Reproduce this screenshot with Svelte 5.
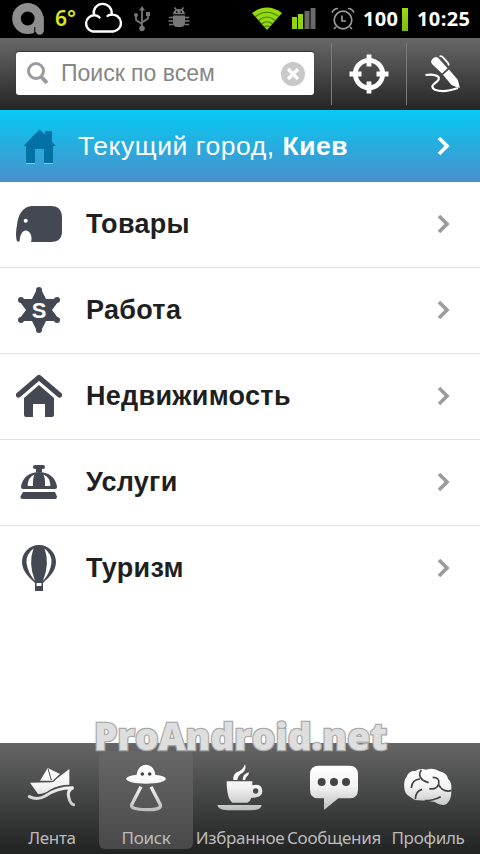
<script>
  const categories = [
    { id: 'goods', name: 'Товары' },
    { id: 'jobs', name: 'Работа' },
    { id: 'realty', name: 'Недвижимость' },
    { id: 'services', name: 'Услуги' },
    { id: 'travel', name: 'Туризм' }
  ];

  const tabs = [
    { id: 'feed', name: 'Лента' },
    { id: 'search', name: 'Поиск' },
    { id: 'favorites', name: 'Избранное' },
    { id: 'messages', name: 'Сообщения' },
    { id: 'profile', name: 'Профиль' }
  ];

  let query = $state('');
  let activeTab = $state('search');
</script>

<div class="screen">
  <div class="status">
    <svg class="logo" viewBox="0 0 32 34" width="32" height="34">
      <circle cx="15.7" cy="16.500" r="11.200" fill="none" stroke="#8e8e8e" stroke-width="8.600" />
      <path d="M27.700 16V28.500" stroke="#8e8e8e" stroke-width="8.300" stroke-linecap="round" />
      <path d="M22.800 25V33" stroke="#000" stroke-width="1" />
    </svg>
    <span class="temp">6°</span>
    <svg class="cloud" viewBox="0 0 40 32" width="40" height="32">
      <path d="M9.500 29.500A8.200 8.200 0 0 1 11 13.300A9 9 0 1 1 28.500 12.700A8.400 8.400 0 0 1 30.500 29.500zM11 13.300Q14.500 13 16.500 15.500M28.500 12.700Q26 12.500 24.500 14" fill="none" stroke="#fff" stroke-width="2.400" stroke-linecap="round" />
    </svg>
    <svg class="usb" viewBox="0 0 18 26" width="18" height="26" fill="none" stroke="#777" stroke-width="1.800">
      <path d="M9 3V22M9 18L3 14V10M9 16.500L15 12.500V8" />
      <path d="M9 0l3 4.500H6z" fill="#777" stroke="none" />
      <circle cx="9" cy="22.500" r="2.800" fill="#777" stroke="none" />
      <circle cx="3" cy="9" r="2" fill="#777" stroke="none" />
      <path d="M13 6h4v4h-4z" fill="#777" stroke="none" />
    </svg>
    <svg class="bug" viewBox="0 0 22 22" width="22" height="22">
      <path d="M5 7.300Q5.500 2 11 2T17 7.300zM5 8.500h12V16q0 4-4 4H9q-4 0-4-4z" fill="#777" />
      <path d="M6.500 .5l2 2.500M15.500 .5l-2 2.500M5 10.500H1M5 14H.5M5 17.500H1M17 10.500h4M17 14h4.500M17 17.500h4" fill="none" stroke="#777" stroke-width="1.600" />
      <path d="M8 4.300h1.500v1.500H8zM12.500 4.300H14v1.500h-1.500z" fill="#000" />
    </svg>
    <svg class="wifi" viewBox="0 0 32 24" width="32" height="24">
      <path d="M1 6Q16-5 31 6L16 23z" fill="#97d80d" />
      <path d="M4.500 9.500q11.500-8.500 23 0M7.500 13.500q8.500-7 17 0M10.500 17q5.500-4.500 11 0M13 20q3-2 6 0" fill="none" stroke="#3d7a00" stroke-width="1.200" />
    </svg>
    <svg class="signal" viewBox="0 0 24 22" width="24" height="22">
      <path d="M0 9h5v12H0zM6 6h5v15H6z" fill="#93d50b" />
      <path d="M12.500 3h5v18h-5zM18.500 0h5v21h-5z" fill="#696969" />
    </svg>
    <svg class="alarm" viewBox="0 0 24 24" width="24" height="24" fill="none" stroke="#999" stroke-width="1.700">
      <circle cx="12" cy="13" r="8.800" />
      <path d="M1 5.500Q3 1.500 7 1.500M23 5.500Q21 1.500 17 1.500M11 8.500V14h4M5 20l-2 2M19 20l2 2" />
    </svg>
    <span class="percent">100</span>
    <i class="battery"></i>
    <span class="clock">10:25</span>
  </div>

  <header>
    <label class="search">
      <svg viewBox="0 0 22 23" width="22" height="23" fill="none" stroke="#9a9ba0">
        <circle cx="9" cy="9" r="7.500" stroke-width="3" />
        <path d="M14.500 15l5.500 6" stroke-width="4" />
      </svg>
      <input type="text" placeholder="Поиск по всем" bind:value={query} />
      <svg viewBox="0 0 24 24" width="24" height="24">
        <circle cx="12" cy="12" r="12" fill="#c9c9c9" />
        <path d="M7 7l10 10M17 7L7 17" stroke="#fff" stroke-width="3.200" />
      </svg>
    </label>
    <button class="tool locate" aria-label="Рядом">
      <svg viewBox="0 0 40 40" width="40" height="40" fill="none" stroke="#fff">
        <circle cx="20" cy="20" r="13.700" stroke-width="4.800" />
        <path d="M20 .5V12.500M20 27.500v12M.5 20h12M27.500 20h12" stroke-width="4.800" />
      </svg>
    </button>
    <button class="tool" aria-label="Написать">
      <svg viewBox="0 0 36 38" width="36" height="38" fill="#fff">
        <path d="M7 4.500Q9.500 .5 13 2.800L22.500 13.300L17 18.500L7.500 9.500Q5 7 7 4.500z" />
        <path d="M24 14.500L32.500 24.500Q34 28 34.800 33Q30.500 32 26.500 30L18 19.800z" />
        <path d="M14.500 1.500q2-1 3.500 .8L23 8q1 1.300 .3 2.500" fill="none" stroke="#fff" stroke-width="1.800" />
        <path d="M.5 20Q10 18.500 13.500 22Q15 25 9.500 28.500Q5 32 10 34.800Q19 38 33 33" fill="none" stroke="#fff" stroke-width="2.200" />
      </svg>
    </button>
  </header>

  <div class="city">
    <svg viewBox="0 0 34 36" width="34" height="36">
      <path d="M3 30v6h9v-6zM21 30v6h9v-6z" fill="#8cc4e6" />
      <path d="M.5 18L16.500 1.500L22 6.500V3H29V14L33 18H30V35H21V21H12V35H3V18z" fill="#0272a6" />
    </svg>
    <p>Текущий город, <b>Киев</b></p>
    <svg class="arrow" viewBox="0 0 13 20" width="13" height="20">
      <path d="M2 2l8 8-8 8" fill="none" stroke="#fff" stroke-width="3.700" />
    </svg>
  </div>

  <ul>
    {#each categories as category}
      <li>
        <svg class="pic" viewBox="0 0 46 46" width="46" height="46" fill="#444853">
          {#if category.id === 'goods'}
            <path d="M16 5H35Q46 5 46 17V30Q46 41 35 41H15Q16 38 15 34Q13 29 9 29.500Q4 31 3.500 40.500H1Q-1 34 1 24Q3 6 16 5z" />
            <circle cx="9.700" cy="19.800" r="2" fill="#fff" />
          {:else if category.id === 'jobs'}
            <path d="M21 2H25L30 12H40L42 15L36 23L42 31L40 34H30L25 44H21L16 34H6L4 31L10 23L4 15L6 12H16z" />
            <circle cx="23" cy="3" r="3" /><circle cx="23" cy="43" r="3" />
            <circle cx="5" cy="13" r="3" /><circle cx="41" cy="13" r="3" />
            <circle cx="5" cy="33" r="3" /><circle cx="41" cy="33" r="3" />
            <text x="23" y="31" text-anchor="middle" fill="#fff">S</text>
          {:else if category.id === 'realty'}
            <path d="M2.500 22L23 4.500L43.500 22" fill="none" stroke="#444853" stroke-width="5.200" stroke-linecap="round" stroke-linejoin="round" />
            <path d="M8 25L23 12L38 25V42q0 2-2 2H29V31H17V44H10q-2 0-2-2z" />
          {:else if category.id === 'services'}
            <rect x="17" y="6" width="12" height="4" rx="2" />
            <path d="M20 9h6v4h-6z" />
            <path d="M5 28C7 8 39 8 41 28z" />
            <path d="M11.500 27Q12 18 18.500 15.500Q16.500 20 17 27zM34.500 27Q34 18 27.500 15.500Q29.500 20 29 27z" fill="#fff" />
            <path d="M7 26H11.500V30H7Q5 30 5 28T7 26zM17 26H29V30H17zM34.500 26H39Q41 26 41 28T39 30H34.500zM11 28h24v2H11z" />
            <path d="M7 33H39L41 37.500Q41 40 39 40H7Q4 40 4.500 37.500z" />
          {:else}
            <path d="M23 0C33 0 40 8 40 17C40 27 31 34 27 38H19C15 34 6 27 6 17C6 8 13 0 23 0z" />
            <path d="M17.500 3.500Q10 9 10.500 18Q12 28 19 36Q12 18 17.500 3.500zM28.500 3.500Q36 9 35.500 18Q34 28 27 36Q34 18 28.500 3.500z" fill="#fff" />
            <path d="M19.800 37v7M26.200 37v7" stroke="#444853" stroke-width="1.500" />
            <path d="M19 41h8V46h-8z" />
          {/if}
        </svg>
        <span>{category.name}</span>
        <svg class="arrow" viewBox="0 0 13 20" width="13" height="20">
          <path d="M2 2l8 8-8 8" fill="none" stroke="#9c9c9c" stroke-width="3.700" />
        </svg>
      </li>
    {/each}
  </ul>

  <nav>
    {#each tabs as tab}
      <button class="tab" class:active={tab.id === activeTab} onclick={() => (activeTab = tab.id)}>
        <svg viewBox="0 0 180 156" width="60" height="52" fill="url(#shine)">
          <defs>
            <linearGradient id="shine" gradientUnits="userSpaceOnUse" x1="0" y1="20" x2="0" y2="150">
              <stop offset="0" stop-color="#fff" />
              <stop offset=".45" stop-color="#f4f4f4" />
              <stop offset="1" stop-color="#bdbdbd" />
            </linearGradient>
          </defs>
          {#if tab.id === 'feed'}
            <path d="M24 68L90 67L142 27V74Q110 74 84 89Q65 103 48 102z" />
            <path d="M54 62L77 24L114 42L92 62z" />
            <path d="M78 26L88 60M92 66L114 44" stroke="#4c4c4c" stroke-width="3" />
            <path d="M22 110Q46 122 70 108Q105 82 154 83Q132 92 142 118Q146 132 155 134" fill="none" stroke="url(#shine)" stroke-width="9" stroke-linecap="round" />
          {:else if tab.id === 'search'}
            <path d="M62 44C66 4 114 4 118 44Q150 48 150 57Q142 71 90 71T30 57Q30 48 62 44z" />
            <circle cx="79" cy="42" r="5.500" fill="#444" />
            <circle cx="101" cy="42" r="5.500" fill="#444" />
            <path d="M75 80L47 134Q42 148 90 149T133 134L105 80" fill="none" stroke="url(#shine)" stroke-width="10" />
          {:else if tab.id === 'favorites'}
            <path d="M50 64H127V76Q157 68 157 94Q157 114 124 113Q122 122 112 128H67Q50 116 50 64z" />
            <circle cx="137" cy="93" r="8" fill="#4a4a4a" />
            <path d="M22 135H155Q154 150 124 151H52Q24 150 22 135z" />
            <path d="M70 60Q68 46 80 37Q100 30 105 12Q110 28 98 38Q82 46 82 60zM98 60Q96 44 117 37Q117 46 109 51Q106 54 106 60z" />
          {:else if tab.id === 'messages'}
            <path d="M44 17H136Q162 17 162 43V89Q162 115 136 115H103L60 150V115H44Q18 115 18 89V43Q18 17 44 17z" />
            <circle cx="53" cy="66" r="12" fill="#444" />
            <circle cx="90" cy="66" r="12" fill="#444" />
            <circle cx="126" cy="66" r="12" fill="#444" />
          {:else}
            <path d="M26 50Q32 32 52 33Q66 24 84 29Q108 22 124 34Q146 38 150 56Q162 66 160 88Q162 118 146 132Q130 140 110 126Q86 122 62 121Q48 122 38 112Q18 102 19 82Q16 62 26 50z" />
            <path d="M40 84Q42 58 66 57M70 30Q58 46 74 60Q84 66 92 68M104 52Q126 52 122 72Q116 90 94 86M122 74Q134 98 160 92M52 118Q52 94 72 88M80 122Q106 122 128 110" fill="none" stroke="#424242" stroke-width="5" />
          {/if}
        </svg>
        <span>{tab.name}</span>
      </button>
    {/each}
  </nav>
  <div class="watermark">ProAndroid.net</div>
</div>

<style>
  :global(body) {
    margin: 0;
  }

  .screen {
    position: relative;
    display: flex;
    flex-direction: column;
    width: 480px;
    height: 854px;
    overflow: hidden;
    background: #fff;
    font-family: "Liberation Sans", Arial, sans-serif;
  }

  svg {
    display: block;
    flex-shrink: 0;
  }

  button {
    border: 0;
    background: none;
    padding: 0;
  }

  .status {
    display: flex;
    align-items: center;
    height: 38px;
    padding-left: 12px;
    background: #000;
    color: #fff;
    font: bold 20px/38px "Open Sans", "Noto Sans", sans-serif;
    white-space: nowrap;
  }

  .temp {
    width: 29px;
    margin-left: 11px;
    color: #dce81c;
    font: 600 21px/34px "Noto Sans", sans-serif;
    padding-bottom: 2px;
  }

  .cloud {
    margin-left: -1px;
    margin-bottom: 2px;
  }

  .usb {
    margin-left: 10px;
  }

  .bug {
    margin-left: 17px;
    margin-bottom: 2px;
  }

  .wifi {
    margin-left: 61px;
  }

  .signal {
    margin-left: 9px;
  }

  .alarm {
    margin-left: 15px;
  }

  .percent {
    width: 39px;
    margin-left: 8px;
    letter-spacing: 0.3px;
  }

  .battery {
    width: 6px;
    height: 23px;
    background: linear-gradient(#9bdc12, #7fb80c);
  }

  .clock {
    margin-left: 9px;
    letter-spacing: 0.4px;
  }

  header {
    display: flex;
    align-items: center;
    box-sizing: border-box;
    height: 72px;
    padding: 0 0 1px 16px;
    background: linear-gradient(#686868, #252525);
  }

  .search {
    display: flex;
    align-items: center;
    box-sizing: border-box;
    width: 298px;
    height: 43px;
    margin: 0 17px 0 0;
    padding: 0 9px 0 11px;
    border-radius: 3px;
    background: #fff;
    box-shadow: 0 -1px 1px #333;
  }

  input {
    flex: 1;
    min-width: 0;
    margin-left: 12px;
    padding: 0 0 1px;
    border: 0;
    outline: 0;
    background: none;
    font: 23px "Liberation Sans", Arial, sans-serif;
  }

  input::placeholder {
    color: #858585;
    opacity: 1;
  }

  .tool {
    display: flex;
    align-items: center;
    justify-content: center;
    width: 73px;
    height: 62px;
    border-left: 1px solid #7b7b7b;
  }

  .locate {
    width: 75px;
  }

  .city {
    display: flex;
    align-items: center;
    height: 72px;
    padding: 0 30px 0 23px;
    box-sizing: border-box;
    background: linear-gradient(#05caf3, #4a8fcb);
    color: #fff;
  }

  .city p {
    margin: 0 0 0 21px;
    font-size: 26.5px;
    letter-spacing: 0.55px;
  }

  .arrow {
    margin-left: auto;
  }

  ul {
    flex: 1;
    margin: 0;
    padding: 0;
    list-style: none;
  }

  li {
    display: flex;
    align-items: center;
    box-sizing: border-box;
    height: 86px;
    padding: 0 30px 0 16px;
    border-bottom: 1px solid #e2e2e2;
  }

  li:last-child {
    border-bottom-color: transparent;
  }

  li svg {
    margin-bottom: 2px;
  }

  li span {
    margin-left: 24px;
    color: #1f1f1f;
    font-size: 27px;
    font-weight: bold;
    letter-spacing: 0.3px;
  }

  .pic text {
    font: bold 22px "Liberation Sans", Arial, sans-serif;
  }

  nav {
    display: flex;
    box-sizing: border-box;
    height: 111px;
    padding: 8px 5px 5px;
    background: linear-gradient(#666, #212222);
  }

  .tab {
    display: flex;
    flex-direction: column;
    align-items: center;
    width: 94px;
    padding-top: 9px;
    border-radius: 6px;
    color: #bbb;
    font: 17px/24px "Noto Sans", sans-serif;
    letter-spacing: -0.3px;
    white-space: nowrap;
  }

  .tab span {
    margin-top: 14px;
  }

  .active {
    background: linear-gradient(#676767, #494949);
  }

  .watermark {
    position: absolute;
    left: 94px;
    top: 716px;
    color: #dedede;
    font: 900 37px/40px "Open Sans", sans-serif;
    letter-spacing: 0.1px;
    -webkit-text-stroke: 2.5px #a9a9a9;
    paint-order: stroke fill;
  }
</style>
